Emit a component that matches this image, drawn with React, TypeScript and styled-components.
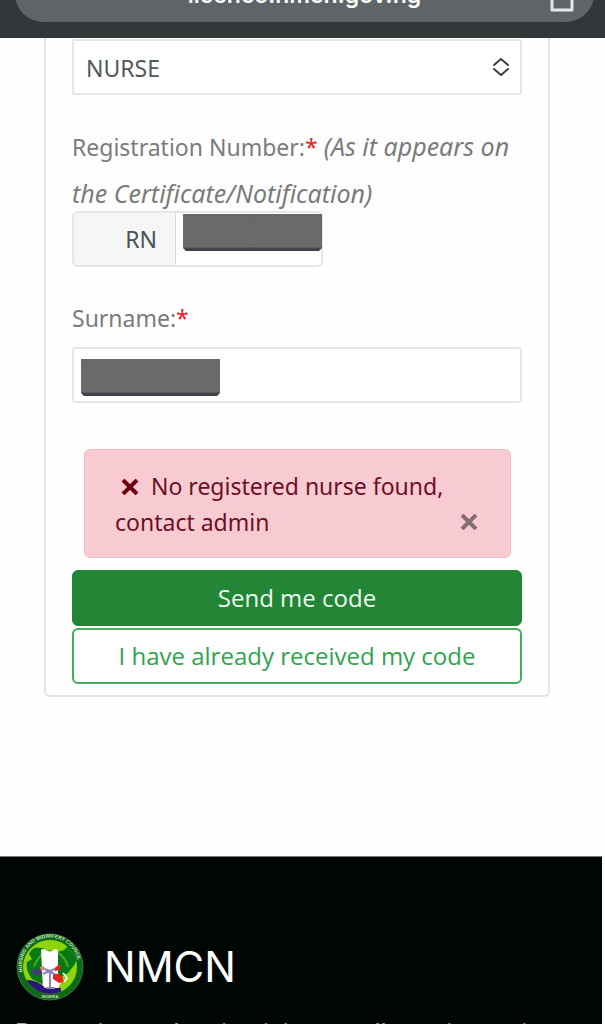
import React from 'react';
import styled, { createGlobalStyle } from 'styled-components';

const GlobalStyle = createGlobalStyle`
  *, *::before, *::after { box-sizing: border-box; }
  body {
    margin: 0;
    background: #fefefe;
    font-family: "Noto Sans", "Open Sans", sans-serif;
    font-size: 23px;
    color: #495057;
  }
  button, input, select { font: inherit; margin: 0; }
`;

const Page = styled.div`
  display: flex;
  flex-direction: column;
  height: 100vh;
  overflow: hidden;
`;

const BrowserBar = styled.header`
  flex: none;
  display: flex;
  align-items: flex-end;
  height: 38px;
  padding: 0 11px 16px 15px;
  overflow: hidden;
  background: #33373a;
`;

const AddressPill = styled.div`
  flex: 1;
  display: flex;
  align-items: center;
  height: 56px;
  padding: 0 20px;
  border-radius: 28px;
  background: #5f6467;
`;

const Address = styled.span`
  flex: 1;
  padding: 2px 0 0 24px;
  text-align: center;
  font-family: Inter, sans-serif;
  font-size: 23px;
  line-height: 32px;
  font-weight: 600;
  color: #fff;
`;

const ShareButton = styled.button`
  display: flex;
  padding: 4px 0 0;
  border: 0;
  background: none;
  color: #e4e8eb;
`;

const Main = styled.main`
  flex: none;
  padding: 0 55px 159px 44px;
`;

const Card = styled.form`
  display: flex;
  flex-direction: column;
  padding: 1px 26px 9px;
  border: 2px solid #e4e4e4;
  border-top: 0;
  border-radius: 0 0 6px 6px;
`;

const SelectBox = styled.div`
  position: relative;
  display: flex;
  color: #3c4043;

  svg {
    position: absolute;
    right: 12px;
    top: 18px;
    pointer-events: none;
  }
`;

const Select = styled.select`
  flex: 1;
  height: 56px;
  padding: 2px 12px 0;
  appearance: none;
  border: 2px solid #e6e6e6;
  border-radius: 3px;
  background: #fff;
  color: #54585c;
`;

const Label = styled.label<{ $gap: number }>`
  margin-top: ${(p) => p.$gap}px;
  line-height: 46px;
  color: #7b7b7b;

  em { font-size: 25px; }
`;

const Required = styled.span`
  color: #ee1c25;
`;

const Field = styled.div<{ $width?: string; $gap?: number }>`
  position: relative;
  display: flex;
  width: ${(p) => p.$width ?? '100%'};
  height: 56px;
  margin-top: ${(p) => p.$gap ?? 0}px;
  border: 2px solid #e6e6e6;
  border-radius: ${(p) => (p.$width ? 6 : 3)}px;
  background: #fff;
`;

const Prefix = styled.span`
  display: flex;
  align-items: center;
  justify-content: flex-end;
  width: 102px;
  padding-right: 18px;
  border-right: 1px solid #dcdcdc;
  border-radius: 4px 0 0 4px;
  background: #f6f6f7;
`;

const TextInput = styled.input`
  flex: 1;
  min-width: 0;
  padding: 0 12px;
  border: 0;
  border-radius: 4px;
  background: transparent;
`;

const Redaction = styled.span<{ $left: number; $top: number }>`
  position: absolute;
  left: ${(p) => p.$left}px;
  top: ${(p) => p.$top}px;
  width: 139px;
  height: 37px;
  background: linear-gradient(#69696b, #6b6b6d 88%, #414148 94%, #3c3c48);
  clip-path: polygon(0 0, 100% 0, 100% 34px, 136px 100%, 3px 100%, 0 34px);
`;

const Alert = styled.div`
  display: flex;
  align-items: flex-end;
  margin: 46px 11px 12px 12px;
  padding: 18px 32px 17px 30px;
  border: 1px solid #eebdc7;
  border-radius: 6px;
  background: #f8cbd3;
  color: #6e0f25;
  line-height: 36px;
`;

const AlertText = styled.p`
  flex: 1;
  margin: 0;

  svg { margin: 0 6px; color: #6e0010; }
`;

const CloseButton = styled.button`
  display: flex;
  padding: 0 0 10px;
  border: 0;
  background: none;
  color: #7f6f74;
`;

const Button = styled.button<{ $outline?: boolean }>`
  height: 56px;
  margin-bottom: 2px;
  padding: 0 12px 2px;
  border: ${(p) => (p.$outline ? '2px solid #45ab5d' : '1px solid #228636')};
  border-radius: 6px;
  font-family: "Open Sans", sans-serif;
  font-size: 24px;
  background: ${(p) => (p.$outline ? '#fff' : '#228636')};
  color: ${(p) => (p.$outline ? '#2fa44c' : '#effaf0')};
`;

const Footer = styled.footer`
  flex: 1 0 auto;
  margin-right: 3px;
  padding: 75px 15px 0;
  border-top: 1px solid #777;
  background: #000603;
`;

const Brand = styled.div`
  display: flex;
  align-items: center;
  gap: 19px;
  font-family: Inter, sans-serif;
  font-size: 42px;
  line-height: 68px;
  color: #fff;
`;

const Tagline = styled.p`
  margin: 14px 0 0;
  font-family: Roboto, sans-serif;
  font-size: 25px;
  line-height: 36px;
  white-space: nowrap;
  color: #a5a8a6;
`;

const ShareIcon = () => (
  <svg width="24" height="32" viewBox="0 0 24 32" fill="none" stroke="currentColor" strokeWidth="3" strokeLinejoin="round" aria-hidden="true">
    <path d="M7 10H2v20h20V10h-5M12 20V2M6 8l6-6 6 6" />
  </svg>
);

const SortIcon = () => (
  <svg width="18" height="20" viewBox="0 0 18 20" fill="none" stroke="currentColor" strokeWidth="2" strokeLinecap="round" strokeLinejoin="round" aria-hidden="true">
    <path d="M2 8l7-6 7 6M2 12l7 6 7-6" />
  </svg>
);

const CrossIcon = () => (
  <svg width="18" height="16" viewBox="0 0 18 16" stroke="currentColor" strokeWidth="4" aria-hidden="true">
    <path d="M2 1l14 14M16 1L2 15" />
  </svg>
);

const Crest = () => (
  <svg width="70" height="70" viewBox="0 0 70 70" role="img" aria-label="NMCN crest">
    <defs>
      <path id="ring-top" d="M8 41a28 28 0 1 1 54 0" />
      <clipPath id="disc"><circle cx="35" cy="35" r="27" /></clipPath>
    </defs>
    <circle cx="35" cy="35" r="33" fill="#0d6b17" stroke="#3d7a3f" strokeWidth="1" />
    <circle cx="35" cy="35" r="27" fill="#8fd40b" />
    <g clipPath="url(#disc)">
      <path d="M14 22q4-8 11-6 6-1 8 6l-2 32-14-7q-7-9-5-17l5-3z" fill="#087a14" />
      <path d="M42 20l7-2 4-4 10 8-3 10-7 9-7 4-4 9z" fill="#087a14" />
      <path d="M19 34q6-14 16-15 14 1 18 16" fill="none" stroke="#4ea52b" strokeWidth="2" />
      <path d="M26 18q2-2 5 0 4 3 7 0 4-2 5 1v22l4 8-5 9H28z" fill="#fff" />
      <path d="M12 48q11 0 18 8h16v8H20q-9-6-8-16z" fill="#2b1678" />
      <path d="M16 39q6-4 11 0-1 5-7 4z" fill="#47357e" />
    </g>
    <path d="M27 36l8 3 7-3M35 39v18M31 56h9M28 42q7-5 13 2" fill="none" stroke="#8a84ba" strokeWidth="2" />
    <path d="M25 35l4-1 1 4-4 1z" fill="#e58a72" />
    <path d="M40 36q3-4 6-2l-1 4-5 1zM38 43q5-3 9 1l2 6-5 1-6-4z" fill="#e5261e" />
    <path d="M48 41l4 5-3 4" fill="none" stroke="#eee" strokeWidth="2" />
    <text fontFamily="Liberation Sans, sans-serif" fontSize="5" fontWeight="700" fill="#c5dfc0">
      <textPath href="#ring-top" startOffset="1">NURSING AND MIDWIFERY COUNCIL</textPath>
    </text>
    <text x="35" y="66" textAnchor="middle" fontFamily="Liberation Sans, sans-serif" fontSize="4" fontWeight="700" fill="#c5dfc0">NIGERIA</text>
  </svg>
);

export default function App() {
  return (
    <>
      <GlobalStyle />
      <Page>
        <BrowserBar>
          <AddressPill>
            <Address>licence.nmcn.gov.ng</Address>
            <ShareButton type="button" aria-label="Share"><ShareIcon /></ShareButton>
          </AddressPill>
        </BrowserBar>
        <Main>
          <Card onSubmit={(e) => e.preventDefault()}>
            <SelectBox>
              <Select aria-label="Category" defaultValue="nurse">
                <option value="nurse">NURSE</option>
              </Select>
              <SortIcon />
            </SelectBox>
            <Label htmlFor="reg-number" $gap={28}>
              Registration Number:<Required>*</Required>{' '}
              <em>(As it appears on the Certificate/Notification)</em>
            </Label>
            <Field $width="251px" $gap={-6}>
              <Prefix>RN</Prefix>
              <TextInput id="reg-number" type="text" />
              <Redaction $left={109} $top={1} />
            </Field>
            <Label htmlFor="surname" $gap={28}>
              Surname:<Required>*</Required>
            </Label>
            <Field $gap={6}>
              <TextInput id="surname" type="text" />
              <Redaction $left={7} $top={10} />
            </Field>
            <Alert role="alert">
              <AlertText>
                <CrossIcon />
                {' '}No registered nurse found, contact admin
              </AlertText>
              <CloseButton type="button" aria-label="Close"><CrossIcon /></CloseButton>
            </Alert>
            <Button type="submit">Send me code</Button>
            <Button type="button" $outline>I have already received my code</Button>
          </Card>
        </Main>
        <Footer>
          <Brand>
            <Crest />
            <span>NMCN</span>
          </Brand>
          <Tagline>Promoting and maintaining excellence in nursing</Tagline>
        </Footer>
      </Page>
    </>
  );
}
